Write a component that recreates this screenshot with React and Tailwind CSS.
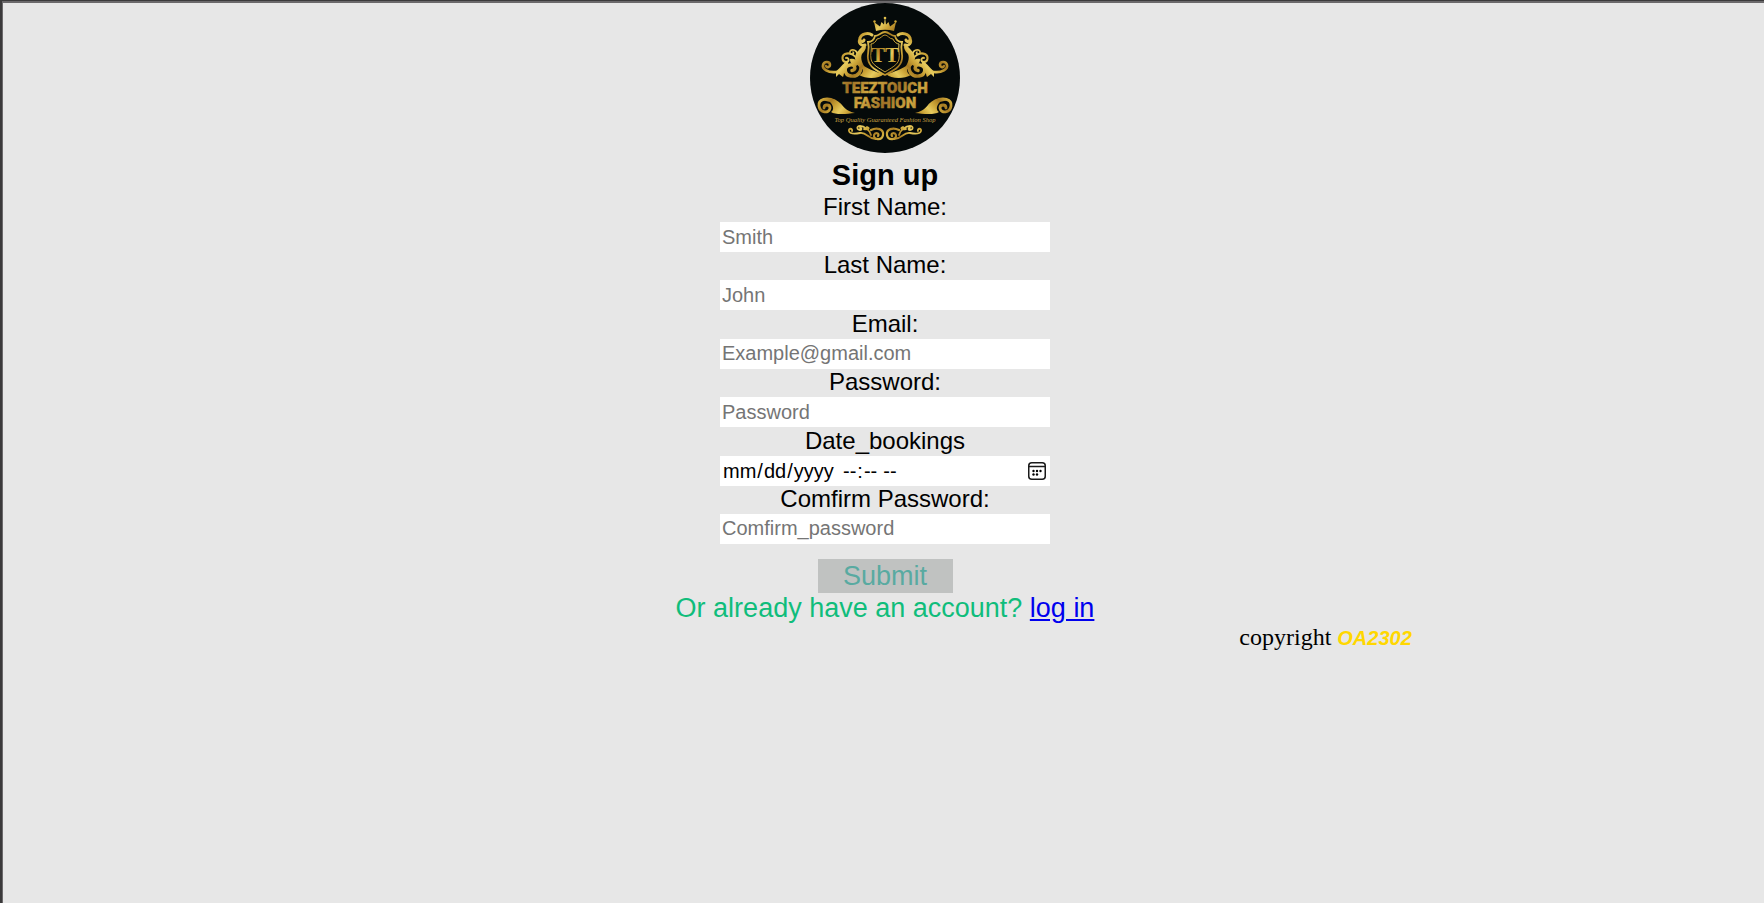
const fields = [
  { id: 'first', label: 'First Name:', type: 'text', placeholder: 'Smith' },
  { id: 'last', label: 'Last Name:', type: 'text', placeholder: 'John' },
  { id: 'email', label: 'Email:', type: 'email', placeholder: 'Example@gmail.com' },
  { id: 'password', label: 'Password:', type: 'password', placeholder: 'Password' },
  { id: 'date', label: 'Date_bookings', type: 'booking' },
  { id: 'confirm', label: 'Comfirm Password:', type: 'password', placeholder: 'Comfirm_password' },
];

// Left half of the crest's ornaments; the right half is its mirror image.
function Flourish() {
  return (
    <g fill="none" stroke="url(#gold)" strokeLinecap="round" strokeLinejoin="round">
      {/* shoulder scroll */}
      <path strokeWidth="3" d="M62 32C58 29 51 31 50 35C49 38 53 40 54 37M50 36C48 40 51 43 55 42" />
      <path fill="url(#gold)" stroke="none" d="M54 41C58 43 55 48 52 51C50 55 52 62 58 68C51 67 45 61 45 55C45 49 51 46 54 41Z" />
      {/* middle curls */}
      <path strokeWidth="2" d="M49 60C46 52 40 49 35 51C31 53 32 59 36 59C40 59 39 54 36 55" />
      <path strokeWidth="1.6" d="M48 52C46 45 39 46 40 50C41 52 45 51 43 49" />
      <path fill="url(#gold)" stroke="none" d="M40 56C44 55 47 57 49 61L46 63C42 62 40 60 40 56Z" />
      {/* large curl beside the shield */}
      <path strokeWidth="3.4" d="M50 60C53 68 48 74 41 73C34 72 33 63 40 62C45 61 47 67 42 67.500" />
      {/* outer curl */}
      <path strokeWidth="2.6" d="M37 60C33 62 32 69 26 69C18 70 12 66 13 62C14 58 20 58 20 62C20 64 17 65 16 63" />
      <path fill="url(#gold)" stroke="none" d="M22 70C28 69 30 63 37 58L38 62C33 65 35 70 33 74L29 71L26 74L26 70Z" />
      {/* leaf under the shield */}
      <path fill="url(#gold)" stroke="none" d="M52 62C58 65 64 69 74 71C69 76 56 76 49 72C53 71 54 67 52 62Z" />
      {/* lower side leaf */}
      <path strokeWidth="2.8" d="M25 98C17 94 8 96 9 103C10 110 19 111 20 105C20 101 14 101 14 105" />
      <path fill="url(#gold)" stroke="none" d="M12 97C20 93 29 98 32 102C36 107 40 109 45 110C37 111 25 112 21 109C24 107 24 103 20 99Z" />
      {/* bottom scrollwork */}
      <path strokeWidth="2.2" d="M61 127C67 124 74 126 73 132C72 138 63 137 64 132C65 129 70 130 68 133" />
      <path strokeWidth="1.8" d="M66 136C58 136 57 129 50 130C45 131 40 131 39 128C38 125 43 125 42 128" />
      <path strokeWidth="1.8" d="M61 132C60 127 54 123 50 123C46 123 47 127 50 127C52 127 52 125 50 125M54 126C59 127 60 125 57 124" />
    </g>
  );
}

function Logo() {
  return (
    <svg className="size-[150px] shrink-0" viewBox="0 0 150 150" role="img" aria-label="Teeztouch Fashion">
      <defs>
        <linearGradient id="gold" gradientUnits="userSpaceOnUse" x1="0" y1="0" x2="10" y2="9" spreadMethod="reflect">
          <stop offset="0" stopColor="#a67a22" />
          <stop offset="0.5" stopColor="#cba437" />
          <stop offset="1" stopColor="#e6cb5e" />
        </linearGradient>
        <linearGradient id="bronze" gradientUnits="userSpaceOnUse" x1="0" y1="0" x2="16" y2="12" spreadMethod="reflect">
          <stop offset="0" stopColor="#9c7026" />
          <stop offset="1" stopColor="#cfa640" />
        </linearGradient>
      </defs>
      <circle cx="75" cy="75" r="75" fill="#050a0a" />
      <Flourish />
      <g transform="translate(150 0) scale(-1 1)">
        <Flourish />
      </g>
      {/* crown */}
      <path fill="url(#gold)" d="M66 28L64 19L70 23.500L71.500 19L74 21.500L75 14L76 21.500L78.500 19L80 23.500L86 19L84 28Q75 25.500 66 28Z" />
      <circle cx="64.500" cy="18.500" r="1.200" fill="#d2a936" />
      <circle cx="85.500" cy="18.500" r="1.200" fill="#d2a936" />
      <circle cx="75" cy="15" r="1.300" fill="#e2c04c" />
      {/* shield */}
      <path fill="#050a0a" stroke="url(#gold)" strokeWidth="1.800" d="M75 29C71 29 69 33 65 33C64 37 61 39 58 39C60 47 57 50 58 56C59 64 67 68 75 72C83 68 91 64 92 56C93 50 90 47 92 39C89 39 86 37 85 33C81 33 79 29 75 29Z" />
      <path fill="none" stroke="url(#gold)" strokeWidth="1" d="M75 32C72 32 71 36 67 36C66 39 63 41 61 41C62 47 60 51 61 56C62 62 69 65 75 69C81 65 88 62 89 56C90 51 88 47 89 41C87 41 84 39 83 36C79 36 78 32 75 32Z" />
      <text x="75" y="59" textAnchor="middle" fontFamily="Liberation Serif, serif" fontWeight="700" fontSize="21" fill="url(#gold)">TT</text>
      <g fontFamily="Roboto, sans-serif" fontWeight="900" fontSize="15" textAnchor="middle" fill="url(#bronze)" stroke="url(#bronze)" strokeWidth="0.400">
        <text x="75" y="90">TEEZTOUCH</text>
        <text x="75" y="105">FASHION</text>
      </g>
      <text x="75" y="119" textAnchor="middle" fontFamily="Liberation Serif, serif" fontStyle="italic" fontSize="6.5" fill="#c9a244">Top Quality Guaranteed Fashion Shop</text>
    </svg>
  );
}

function CalendarIcon() {
  return (
    <svg className="size-[18px]" viewBox="0 0 18 18" aria-hidden="true">
      <rect x="0.750" y="0.750" width="16.500" height="16.500" rx="3" fill="none" stroke="#1a1a1a" strokeWidth="1.500" />
      <path d="M1 4.500H17" stroke="#1a1a1a" strokeWidth="1.500" />
      <g fill="#000">
        <circle cx="5.500" cy="9" r="1.200" />
        <circle cx="9" cy="9" r="1.200" />
        <circle cx="12.500" cy="9" r="1.200" />
        <circle cx="5.500" cy="12.500" r="1.200" />
        <circle cx="9" cy="12.500" r="1.200" />
      </g>
    </svg>
  );
}

function BookingInput({ id }) {
  return (
    <div className="flex h-[30px] w-[330px] items-center bg-white pr-1 text-xl leading-[26px]">
      <input
        id={id}
        type="date"
        className="h-[30px] w-[122px] pl-0.5 [&::-webkit-calendar-picker-indicator]:hidden"
      />
      <input
        type="time"
        aria-label="Booking time"
        className="h-[30px] w-20 [&::-webkit-calendar-picker-indicator]:hidden"
      />
      <button
        type="button"
        aria-label="Open calendar"
        className="ml-auto"
        onClick={() => document.getElementById(id).showPicker()}
      >
        <CalendarIcon />
      </button>
    </div>
  );
}

export default function App() {
  return (
    <div className="min-h-screen border-t border-l-2 border-[#3b3a3b] bg-[#e7e7e7] font-['Liberation_Sans',Arial,sans-serif] text-black">
      <div className="min-h-[calc(100vh-1px)] border-t-2 border-l border-[#6b696b]">
        <main className="flex flex-col items-center pl-[3px]">
          <Logo />
          <h1 className="pt-1 text-[29px] leading-[37px] font-bold">Sign up</h1>
          <form className="flex flex-col items-center" onSubmit={(e) => e.preventDefault()}>
            <div className="flex min-h-[350px] flex-col justify-between">
              {fields.map((f) => (
                <div key={f.id} className="flex flex-col items-center">
                  <label htmlFor={f.id} className="pb-0.5 text-2xl leading-[26px]">{f.label}</label>
                  {f.type === 'booking' ? (
                    <BookingInput id={f.id} />
                  ) : (
                    <input
                      id={f.id}
                      type={f.type}
                      placeholder={f.placeholder}
                      className="h-[30px] w-[330px] bg-white px-0.5 text-xl leading-[26px] placeholder:text-[#757575]"
                    />
                  )}
                </div>
              ))}
            </div>
            <button type="submit" className="mt-[15px] h-[34px] w-[135px] bg-[#c0c2c1] text-[27px] leading-[34px] text-[#59aaa1]">
              Submit
            </button>
          </form>
          <p className="text-[27px] leading-[30px] text-[#10bd7b]">
            Or already have an account?{' '}
            <a href="#login" className="text-[#0000ee] underline">log in</a>
          </p>
        </main>
        <footer className="w-4/5 text-right font-['Liberation_Serif',serif] text-2xl leading-7">
          copyright{' '}
          <span className="font-['Liberation_Sans',Arial,sans-serif] text-xl font-bold text-[#ffd700] italic">OA2302</span>
        </footer>
      </div>
    </div>
  );
}
